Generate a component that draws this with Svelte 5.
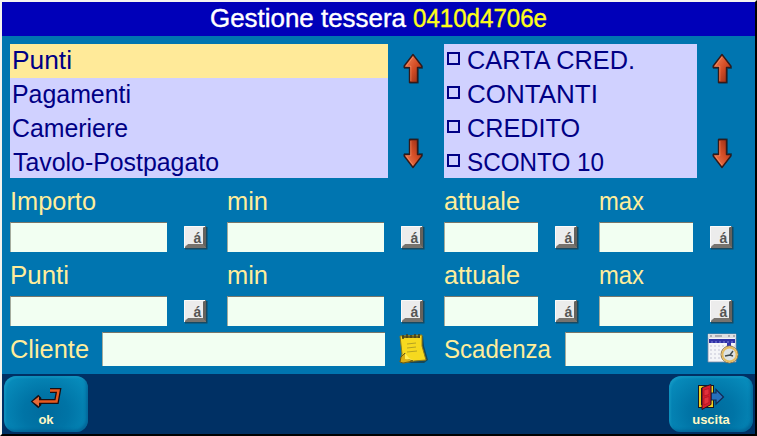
<script>
  const modes = [
    { name: 'Punti', inset: 1.5, width: 60 },
    { name: 'Pagamenti', inset: 1.5, width: 119 },
    { name: 'Cameriere', inset: 1.5, width: 116 },
    { name: 'Tavolo-Postpagato', inset: 2.5, width: 206 }
  ];
  const payments = [
    { name: 'CARTA CRED.', width: 168 },
    { name: 'CONTANTI', width: 131 },
    { name: 'CREDITO', width: 113 },
    { name: 'SCONTO 10', width: 137 }
  ];
  const rest = [
    { name: 'min', width: 41 },
    { name: 'attuale', width: 76 },
    { name: 'max', width: 45 }
  ];
  const groups = [
    [{ name: 'Importo', width: 86 }, ...rest],
    [{ name: 'Punti', width: 59 }, ...rest]
  ];
  let selected = $state('Punti');
</script>

{#snippet label(text, width)}
  <svg class="label" {width} height="34" style:width="{width}px">
    <text x="0" y="25" textLength={width} lengthAdjust="spacingAndGlyphs">{text}</text>
  </svg>
{/snippet}

{#snippet arrow(down)}
  <button class="arrow" aria-label={down ? 'Giù' : 'Su'}>
    <svg width="24" height="34" viewBox="0 0 24 34">
      <g transform={down ? 'translate(0 34) scale(1 -1)' : undefined}>
        <path d="M12.5 3 22 14.5V17h-4v14.5H8.5V17H3v-2z" fill="#00354d" opacity=".6" />
        <path d="M12 2.5 20.8 14v1.5H16.5v15h-8v-15H3.2V14z" fill="url(#copper)" stroke="#321a1b" stroke-width="1.4" stroke-linejoin="round" />
        <path d="M9.8 29V14.2H5.2L12 5" fill="none" stroke="#ff9a70" stroke-width="1" opacity=".55" />
      </g>
    </svg>
  </button>
{/snippet}

{#snippet key()}
  <button class="key" aria-label="Tastiera">
    <svg width="25" height="25" viewBox="0 0 25 25">
      <path d="M2 2h22.5v22.5H2z" fill="#174a62" />
      <path d="M1 1h22v22H1z" fill="#777672" />
      <path d="M1 1h22l-3 2v17l3 3H1z" fill="#c9c9c7" />
      <path d="M1 23 5 19h15l3 4z" fill="#77736e" />
      <path d="m20 3 3-2v22l-3-4z" fill="#66625d" />
      <path d="M2 2h18v17H5L2 21z" fill="#ececec" />
      <path d="M1.5 23V1.5H22" fill="none" stroke="#fafafa" />
      <text x="10.5" y="18" class="keytext">á</text>
    </svg>
  </button>
{/snippet}

<div class="window">
  <svg class="defs" width="0" height="0">
    <defs>
      <linearGradient id="copper" x1="0" y1="0" x2="1" y2="1">
        <stop offset="0" stop-color="#f58a60" />
        <stop offset=".5" stop-color="#d64f27" />
        <stop offset="1" stop-color="#8c2914" />
      </linearGradient>
    </defs>
  </svg>

  <header>
    <svg width="340" height="34" class="title">
      <text x="1" y="25" textLength="196" lengthAdjust="spacingAndGlyphs" fill="#fff">Gestione tessera</text>
      <text x="204" y="25" textLength="134" lengthAdjust="spacingAndGlyphs" fill="#ffff18">0410d4706e</text>
    </svg>
  </header>

  <main>
    <section class="lists">
      <div class="list modes">
        {#each modes as mode}
          <button
            class="row"
            class:selected={mode.name === selected}
            style:padding-left="{mode.inset}px"
            onclick={() => (selected = mode.name)}>{@render label(mode.name, mode.width)}</button>
        {/each}
      </div>
      <div class="arrows">{@render arrow(false)}{@render arrow(true)}</div>
      <div class="list payments">
        {#each payments as payment}
          <div class="row"><span class="box"></span>{@render label(payment.name, payment.width)}</div>
        {/each}
      </div>
      <div class="arrows">{@render arrow(false)}{@render arrow(true)}</div>
    </section>

    {#each groups as group}
      <section class="fields">
        {#each group as field}
          <div class="field">
            {@render label(field.name, field.width)}
            <div class="entry"><input aria-label={field.name} />{@render key()}</div>
          </div>
        {/each}
      </section>
    {/each}

    <section class="bottom">
      <div class="client">
        {@render label('Cliente', 79)}
        <input aria-label="Cliente" />
        <svg class="note" width="30" height="32" viewBox="0 0 30 32">
          <path d="m4 4 21-1 1 10 4 14-4 3H5z" fill="#164859" />
          <path d="m2 3 22-1v11l4 14-12 1-10 2-4-1 2-8z" fill="#f6d91f" stroke="#8e7a19" />
          <path d="m3 24 4-4 1 5 7 3-10 2-3-1z" fill="#dcae12" stroke="#675b18" />
          <path d="m7 20 4 5 4 2-8-1z" fill="#ffed58" />
          <path d="M4 4h18M5 2v4M9 1v4M13 2v3M17 1v4M21 1v4" fill="none" stroke="#423d1c" stroke-width="1.5" />
          <path d="m9 11 9-1M9 15l9-1M9 19l10-1" stroke="#b5a222" />
        </svg>
      </div>
      <div class="expiry">
        {@render label('Scadenza', 107)}
        <input aria-label="Scadenza" />
        <svg class="calendar" width="32" height="32" viewBox="0 0 32 32">
          <path d="M1 1h28v28H1z" fill="#f4f5f8" stroke="#7e8ca4" stroke-width=".8" />
          <path d="M1 1h28v4H1z" fill="#dedee1" />
          <path d="M3 3h2m3 0h7m6 0h2m3 0h2" stroke="#787982" stroke-width="1.2" />
          <path d="M2 6h26v4H2z" fill="#3032a5" />
          <path d="M4 9h23" stroke="#7f82dc" stroke-dasharray="2 2" />
          <path d="M3 13h25M3 17h25M3 21h16M3 25h10" stroke="#c3c5d6" stroke-dasharray="2 2" stroke-width="1.2" />
          <path d="M20 10h4v3h-4z" fill="#3436ad" />
          <circle cx="22.5" cy="21.5" r="8.5" fill="#eee8db" stroke="#8c7545" />
          <circle cx="22.5" cy="21.5" r="7" fill="#dce2e4" stroke="#e6bc5f" stroke-width="1.8" />
          <path d="m18 23 5-1 3-4m-3 4 3 1" fill="none" stroke="#3e484d" stroke-width="1.4" />
        </svg>
      </div>
    </section>
  </main>

  <footer>
    <button class="action">
      <svg width="34" height="24" viewBox="0 0 34 24">
        <path d="M21 4.5h8.5l-2 11H6m5-5-5.5 5 5.5 5" fill="none" stroke="#190e12" stroke-width="5" />
        <path d="M21 4.5h8.5l-2 11H8" fill="none" stroke="#e75a20" stroke-width="2.4" />
        <path d="m3.5 15.5 6.5-5v10z" fill="#e66a38" />
      </svg>
      <span>ok</span>
    </button>
    <button class="action exit">
      <svg width="28" height="28" viewBox="0 0 28 28">
        <path d="M3 4h12v19H3z" fill="#171724" stroke="#171724" stroke-width="4" />
        <path d="M3 4h12v19H3z" fill="#171724" stroke="#f1cf20" stroke-width="2" />
        <path d="M14 10h5V6.5l7.5 7.5-7.5 7v-4h-5z" fill="#2670bd" stroke="#122b54" stroke-width="1.2" />
        <path d="m5 4.5 9-3v20l-9 5z" fill="#d81d29" stroke="#251521" />
        <path d="m7 7 5-1.5v6L7 13zm0 8 5-1.5v6L7 22z" fill="#e2303a" stroke="#a61422" stroke-width=".7" />
      </svg>
      <span>uscita</span>
    </button>
  </footer>
</div>

<style>
  :global(body) { margin: 0; }
  .window {
    box-sizing: border-box;
    width: 757px;
    height: 436px;
    border: solid;
    border-width: 2px;
    border-color: #f5f4ef #000 #000 #f5f4ef;
    background: #0075b0;
    display: flex;
    flex-direction: column;
    overflow: hidden;
    font-family: "Liberation Sans", Arial, sans-serif;
  }
  .defs { position: absolute; }
  button { border: 0; padding: 0; margin: 0; background: none; font: inherit; }
  svg { display: block; flex: none; }
  header { height: 34px; background: #0000b9; padding-left: 207px; flex: none; }
  .title { font-size: 25px; overflow: visible; stroke-width: .4px; }
  .title text:first-child { stroke: #fff; }
  .title text:last-child { stroke: #ffff18; }
  main { height: 330px; padding: 8px 0 0 8px; flex: none; }
  .label { font-size: 26.5px; fill: #ffed9b; overflow: visible; }
  .lists { display: flex; height: 134px; }
  .list { background: #d0d1ff; overflow: hidden; }
  .modes { width: 378px; }
  .payments { width: 253px; }
  .row { display: flex; align-items: center; width: 100%; height: 34px; box-sizing: border-box; }
  .row .label { fill: #000085; }
  .selected { background: #ffea99; }
  .payments .row { padding-left: 3px; gap: 6.5px; }
  .box { width: 13px; height: 13px; box-sizing: border-box; border: 2px solid #000085; margin-bottom: 5px; }
  .arrows { width: 56px; display: flex; flex-direction: column; padding: 8px 0 8px 13px; box-sizing: border-box; justify-content: space-between; }
  .arrow { width: 24px; height: 34px; }
  .fields { display: grid; grid-template-columns: 217px 217px 154.5px 150px; height: 74px; padding-top: 7px; box-sizing: border-box; }
  .field { display: flex; flex-direction: column; height: 67px; }
  .entry { display: flex; align-items: center; gap: 16px; height: 30px; margin-top: 3px; }
  input { box-sizing: border-box; border: 0; border-top: 1px solid #78776b; border-left: 1px solid #a4ac9d; padding: 0 3px; background: #f2fff2; height: 30px; width: 94.5px; font: 25px "Liberation Sans", Arial, sans-serif; outline: none; border-radius: 0; margin: 0; }
  .field:nth-child(-n+2) input { width: 157px; }
  .field:nth-child(3) input { width: 94px; }
  .key { height: 25px; }
  .keytext { font: bold 14px "Liberation Sans", Arial, sans-serif; fill: #555; }
  .bottom { display: flex; height: 40px; }
  .client, .expiry { display: flex; align-items: center; height: 34px; margin-top: 6px; }
  .client { width: 434px; }
  .bottom input { height: 34px; }
  .bottom .label { transform: translateY(1px); }
  .client input { width: 283px; margin-left: 13px; }
  .expiry input { width: 128px; margin-left: 14px; }
  .note { margin-left: 13px; }
  .calendar { margin-left: 14px; }
  footer { flex: 1; background: #003064; padding: 2px; display: flex; justify-content: space-between; }
  .action { width: 84px; height: 56px; border-radius: 12px; background: radial-gradient(ellipse at 50% 65%, #006b9d 0, #0074a6 38%, #078bbb 85%, #159bc5 100%); box-shadow: inset 2px 2px 2px #23a8cf55, inset -2px -2px 3px #004c8188; display: flex; flex-direction: column; align-items: center; justify-content: flex-end; }
  .action span { color: #fff8c4; font-weight: bold; font-size: 13px; line-height: 15px; margin-bottom: 5px; }
  .action svg { margin-bottom: 2px; }
  .exit svg { margin-bottom: 1px; }
</style>
